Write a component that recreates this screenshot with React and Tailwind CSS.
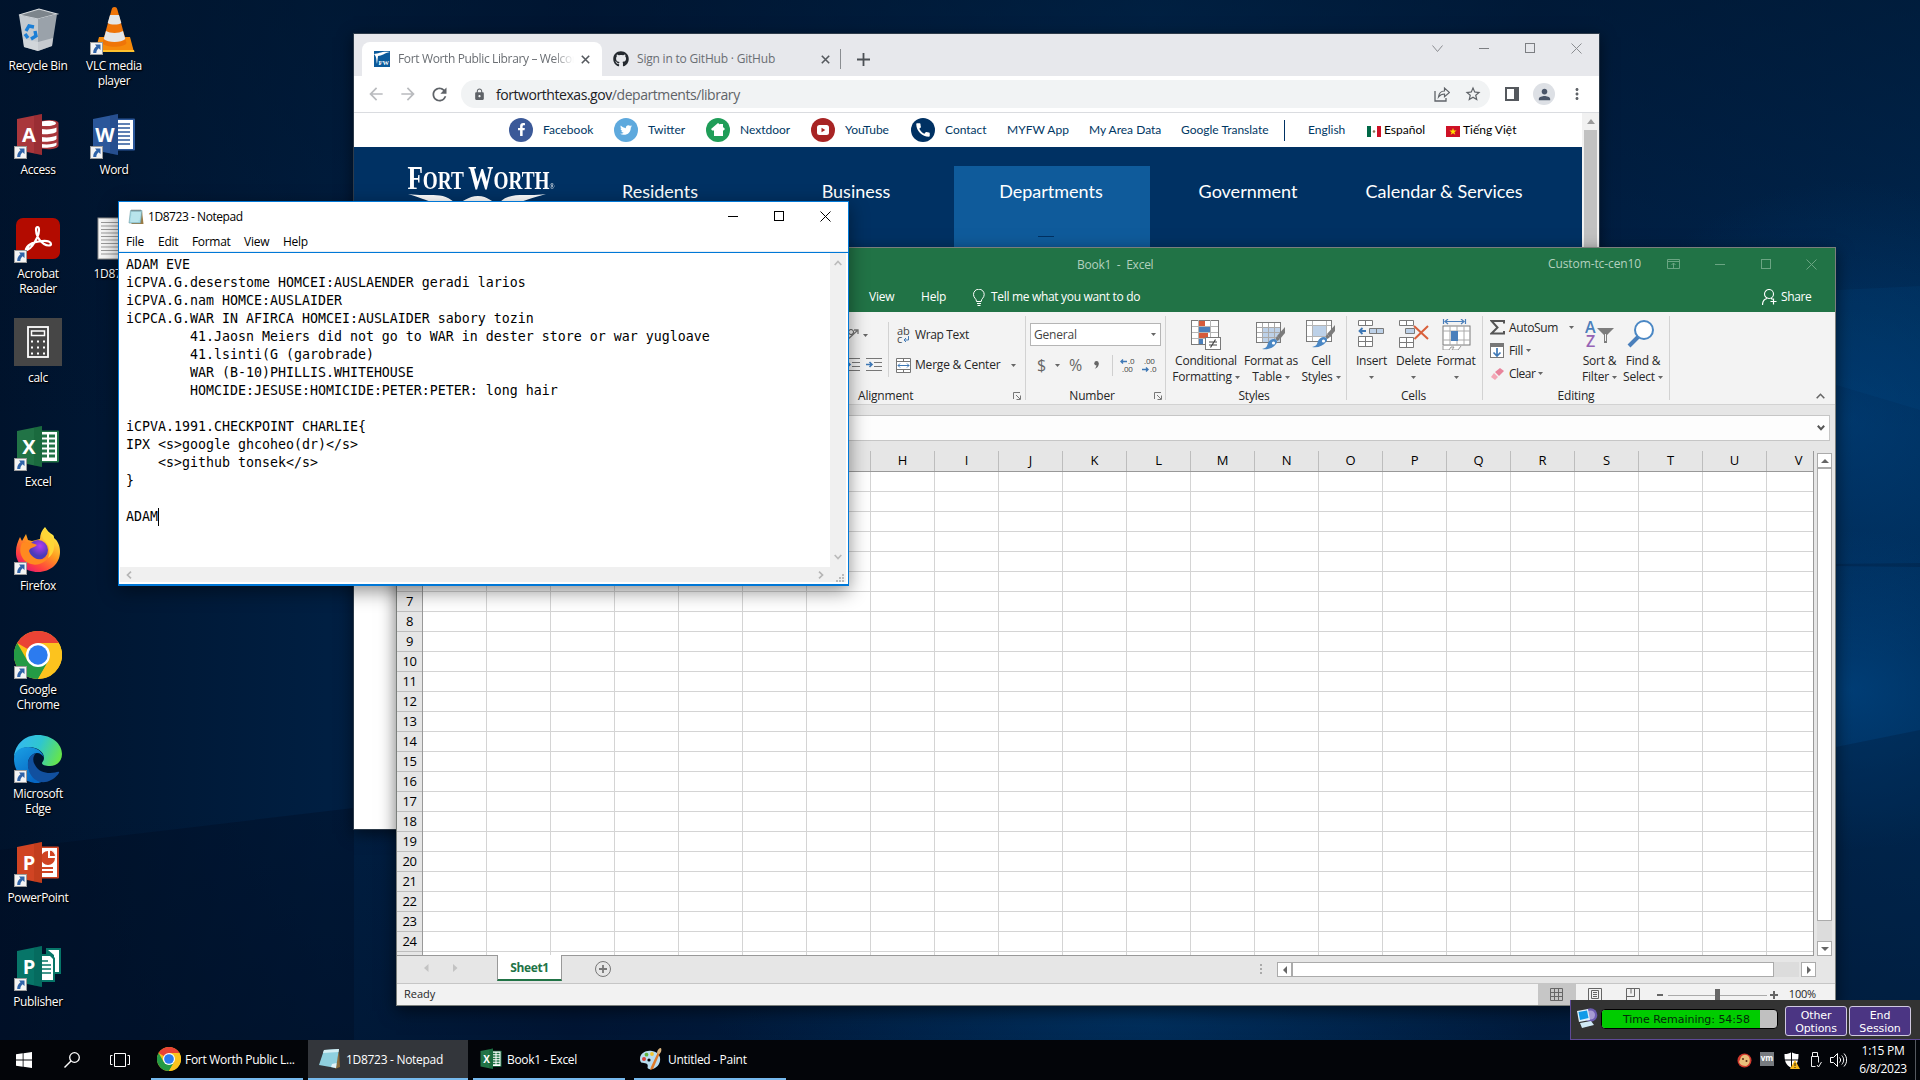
import React from "react";
import { FaFacebookF, FaTwitter, FaGithub } from "react-icons/fa";
import { MdRefresh, MdLock, MdStarBorder, MdPerson, MdArrowBack, MdArrowForward, MdMoreVert, MdCall } from "react-icons/md";

/* ---------- shared bits ---------- */

const Caret = ({ className = "" }) => (
  <svg className={"shrink-0 " + className} width="5" height="3" viewBox="0 0 5 3"><path d="M0 0h5L2.5 3z" fill="#666" /></svg>
);

const Shortcut = () => (
  <svg className="absolute bottom-0 left-0" width="13" height="13" viewBox="0 0 13 13">
    <rect x=".5" y=".5" width="12" height="12" fill="#f4f4f4" stroke="#9a9a9a" />
    <path d="M5 2.5h5.5V8L8.6 6.2C7.2 7.4 6.4 8.9 6.3 11H3.2c0-3 1.2-5.200 3.300-6.700z" fill="#2f63a8" />
  </svg>
);

const ChromeLogo = ({ className = "" }) => (
  <svg className={className} viewBox="0 0 48 48">
    <circle cx="24" cy="24" r="24" fill="#fbc116" />
    <path d="M24 24 3.200 12A24 24 0 0 1 44.800 12z" fill="#ea4335" />
    <path d="M3.200 12A24 24 0 0 0 24 48l10.400-18L13.600 30z" fill="#249a45" />
    <path d="M24 12h20.800A24 24 0 0 1 24 48l10.400-18z" fill="#fcc31e" />
    <circle cx="24" cy="24" r="12" fill="#fff" />
    <circle cx="24" cy="24" r="9.700" fill="#2c7bef" />
  </svg>
);

const OfficeIcon = ({ letter, color, dark, children, className = "" }) => (
  <svg className={className} viewBox="0 0 48 48">
    {children}
    <path d="M3 8 28 3v41L3 39z" fill={color} />
    <path d="M20 4.600 28 3v41l-8-1.600z" fill={dark} opacity=".35" />
    <text x="15" y="31" textAnchor="middle" fontFamily="Open Sans, sans-serif" fontWeight="700" fontSize="20" fill="#fff">{letter}</text>
  </svg>
);

const AccessIcon = () => (
  <OfficeIcon letter="A" color="#a9373c" dark="#7d1f26" className="h-12 w-12">
    <path d="M27 10c8-2 17-1 17.500 2v23c-1 3-9 4-17.500 2.500z" fill="#a9373c" />
    <path d="M27 10.500c8-1.500 15-.5 15 1.700s-8 3.500-15 2.600zM27 18c7 1 13 0 15.500-1.500v4c-2 2.500-9 3-15.500 2.500zM27 26c7 1 13 0 15.500-1.500v3.500c-2 2.500-9 3-15.500 2.500zM27 33c7 1 13 0 15.500-1.500v2.500c-2 2.500-9 3-15.500 2.500z" fill="#fff" />
  </OfficeIcon>
);
const WordIcon = () => (
  <OfficeIcon letter="W" color="#2b579a" dark="#1c3f7c" className="h-12 w-12">
    <rect x="26" y="7.500" width="19" height="32" rx="1" fill="#2b579a" />
    <rect x="26" y="9" width="17" height="29" fill="#fff" />
    <path d="M28 13h12M28 17h12M28 21h12M28 25h12M28 29h12M28 33h12" stroke="#2b579a" strokeWidth="1.700" />
  </OfficeIcon>
);
const ExcelIcon = ({ className = "h-12 w-12" }) => (
  <OfficeIcon letter="X" color="#217346" dark="#0f5a30" className={className}>
    <rect x="26" y="7.500" width="19" height="32" rx="1" fill="#217346" />
    <rect x="26" y="9" width="17" height="29" fill="#fff" />
    <path d="M28 13h5M28 18h5M28 23h5M28 28h5M28 33h5M35 13h6M35 18h6M35 23h6M35 28h6M35 33h6" stroke="#217346" strokeWidth="2.800" />
  </OfficeIcon>
);
const PowerPointIcon = () => (
  <OfficeIcon letter="P" color="#d04423" dark="#a83315" className="h-12 w-12">
    <rect x="26" y="7.500" width="19" height="32" rx="1" fill="#d04423" />
    <rect x="26" y="9" width="17" height="29" fill="#fff" />
    <path d="M34 12v7h7a7 7 0 1 1-7-7z" fill="#d04423" /><path d="M35.500 11a6.500 6.500 0 0 1 6 6.500h-6z" fill="#d04423" stroke="#fff" />
    <path d="M28 29h11M28 33h11" stroke="#d04423" strokeWidth="1.800" />
  </OfficeIcon>
);
const PublisherIcon = () => (
  <OfficeIcon letter="P" color="#077568" dark="#04594f" className="h-12 w-12">
    <path d="M32 5h15v26H32z" fill="#077568" /><path d="M34 7h11v22h-5V12z" fill="#fff" />
    <path d="M26 11h11l4 4v24H26z" fill="#077568" /><path d="M26 13h10l3 3v21H26z" fill="#fff" />
    <path d="M28 18h6M28 22h9M28 26h9M28 30h9" stroke="#077568" strokeWidth="1.700" />
  </OfficeIcon>
);

const RecycleBin = () => (
  <svg className="h-12 w-12" viewBox="0 0 48 48">
    <path d="M5 8 25 2l18 5-19 5z" fill="#7d858c" stroke="#d8dcdf" strokeWidth="1.200" />
    <path d="M5 8 24 12v32L10 40z" fill="#c4cad0" /><path d="M24 12 43 7 38 39 24 44z" fill="#9aa2aa" />
    <path d="M9 32l15 3 15-4-1 8-14 5-14-4z" fill="#d9dcde" opacity=".7" />
    <g fill="none" stroke="#1c7fd6" strokeWidth="3.400"><path d="M12 24l3-5 5 1" /><path d="M21 24l1 5-5 3" /><path d="M14 31l-3-4" /></g>
  </svg>
);
const Vlc = () => (
  <svg className="h-12 w-12" viewBox="0 0 48 48">
    <path d="M9 30h31l4 15H5z" fill="#f58a0b" /><path d="M5 43h39l.5 2H4.500z" fill="#ffc12e" />
    <path d="M24.500 0c2 0 2.500 1 3 3l9 33c-2 5-22 5-24 0l9-33c.5-2 1-3 3-3z" fill="#ef7509" />
    <path d="M20 8h9l2.300 8c-3 2-10.500 2-13.600 0zM16 24c4 2.500 13 2.500 17 0l2.300 8c-4 4-17.500 4-21.600 0z" fill="#e4e6e8" />
  </svg>
);
const Acrobat = () => (
  <svg className="h-12 w-12" viewBox="0 0 48 48">
    <rect x="2" y="3" width="44" height="41" rx="7" fill="#b30b00" />
    <path d="M12 34c3-6 9-7 16-8 6-.6 9 1 9 3s-4 2-7 0c-5-3-8-9-8-14 0-4 3-4 3 0 0 6-4 12-7 16-2 3-7 5-6 3z" fill="none" stroke="#fff" strokeWidth="2.200" />
  </svg>
);
const TextFile = () => (
  <svg className="h-12 w-12" viewBox="0 0 48 48">
    <rect x="8" y="3" width="32" height="41" fill="#f8f8f8" stroke="#8d8d8d" />
    <path d="M11 7.500h26M11 11h26M11 14.500h26M11 18h26M11 21.500h26M11 25h26M11 28.500h26M11 32h26M11 35.500h26M11 39h26" stroke="#9b9b9b" strokeWidth="1" />
  </svg>
);
const Calc = () => (
  <div className="-mt-px flex h-12 w-12 items-center justify-center bg-[#464646]">
    <svg width="24" height="32" viewBox="0 0 24 32">
      <rect x="2" y="1" width="20" height="30" fill="none" stroke="#fff" strokeWidth="1.800" />
      <rect x="5.500" y="5" width="13" height="4.500" fill="none" stroke="#fff" strokeWidth="1.500" />
      <path d="M5 15.500h16M5 21.500h16M5 27.500h16" stroke="#fff" strokeWidth="2" strokeDasharray="2 4" />
    </svg>
  </div>
);
const Firefox = () => (
  <svg className="h-12 w-12" viewBox="0 0 48 48">
    <defs>
      <linearGradient id="ffBody" x1=".8" y1=".1" x2=".2" y2="1"><stop offset="0" stopColor="#fff14a" /><stop offset=".4" stopColor="#ff9a1f" /><stop offset=".75" stopColor="#ff4040" /><stop offset="1" stopColor="#e3127a" /></linearGradient>
      <radialGradient id="ffGlobe" cx=".6" cy=".3"><stop offset="0" stopColor="#b23bf0" /><stop offset="1" stopColor="#4b3bb8" /></radialGradient>
    </defs>
    <path d="M31 0c2 3 4 6 8 8 1 1 1 2 1 3 4 3 6 8 6 14 0 11-9 20-22 20S1 36 2 24c0-5 2-10 4-14l2 4 4-7 2 6 4 1 8-2c0-5 2-9 5-12z" fill="url(#ffBody)" />
    <circle cx="24" cy="23" r="10" fill="url(#ffGlobe)" />
    <path d="M8 16c6-2 11 0 15 2-3 3-7 2-8 6 3 9 14 11 20 5-4 9-17 12-25 4-4-5-5-11-2-17z" fill="#ff8a20" />
    <path d="M31 1c2 4 8 8 9 14 1 6-1 13-6 16 3-6 1-14-4-18-3-4-2-9 1-12z" fill="#ffd636" />
  </svg>
);
const Edge = () => (
  <svg className="h-12 w-12" viewBox="0 0 48 48">
    <defs>
      <linearGradient id="edTop" x1="0" y1=".3" x2="1" y2=".6"><stop offset="0" stopColor="#35b8f2" /><stop offset=".5" stopColor="#2fc6cf" /><stop offset="1" stopColor="#66e54a" /></linearGradient>
      <linearGradient id="edLeft" x1="0" y1="0" x2=".5" y2="1"><stop offset="0" stopColor="#1aa0e4" /><stop offset="1" stopColor="#0667c4" /></linearGradient>
    </defs>
    <path d="M0 22C1 9 11 0 24 0c14 0 24 9 24 19 0 8-6 12-12 12-5 0-8-1-8-3 0-1 2-2 2-5 0-4-3-8-9-10C12 10 3 14 0 22z" fill="url(#edTop)" />
    <path d="M0 24c0-8 6-12 14-12 9 0 15 5 16 11-1-3-4-5-7-5-4 0-9 4-9 11 0 9 8 15 15 17-2 1.500-4 2-6 2C10 48 0 37 0 24z" fill="url(#edLeft)" />
    <path d="M14 27c1-5 4-8 8-9-4 4-3 9-1 12 3 6 9 8 15 8 5 0 8-2 9-1 1 0-3 6-8 8-5 3-11 3-15 0-5-3-9-10-8-18z" fill="#11509f" />
  </svg>
);

const ChromeLogoBig = () => <ChromeLogo className="h-12 w-12" />;

const ICONS = [
  [RecycleBin, "Recycle Bin", false], [AccessIcon, "Access", true], [Acrobat, "Acrobat Reader", true], [Calc, "calc", false],
  [ExcelIcon, "Excel", true], [Firefox, "Firefox", true], [ChromeLogoBig, "Google Chrome", true], [Edge, "Microsoft Edge", true],
  [PowerPointIcon, "PowerPoint", true], [PublisherIcon, "Publisher", true],
];
const ICONS2 = [[Vlc, "VLC media player", true], [WordIcon, "Word", true], [TextFile, "1D8723", false]];

function DesktopIcon({ Icon, label, shortcut }) {
  return (
    <div className="flex h-[104px] w-[76px] flex-col items-center pt-[7px]">
      <div className="relative h-12 w-12"><Icon />{shortcut && <Shortcut />}</div>
      <div className="mt-[3px] w-[68px] text-center text-[12px] leading-[15px] tracking-[-0.35px] text-white [text-shadow:0_1px_2px_#000,1px_1px_1px_#000]">{label}</div>
    </div>
  );
}

/* ---------- wallpaper ---------- */

function Wallpaper() {
  return (
    <svg className="absolute inset-0" width="1920" height="1080" viewBox="0 0 1920 1080">
      <defs>
        <linearGradient id="base" x1="0" x2="1"><stop offset="0" stopColor="#00132c" /><stop offset=".17" stopColor="#001f42" /><stop offset=".3" stopColor="#00183a" /><stop offset=".6" stopColor="#00305f" /><stop offset=".8" stopColor="#002148" /><stop offset="1" stopColor="#002a55" /></linearGradient>
        <linearGradient id="shade" x1="0" y1="0" x2="0" y2="1"><stop offset="0" stopColor="#00142c" stopOpacity=".6" /><stop offset=".4" stopColor="#00112a" stopOpacity="0" /><stop offset=".75" stopColor="#00112a" stopOpacity="0" /><stop offset="1" stopColor="#00112a" stopOpacity=".5" /></linearGradient>
        <radialGradient id="glow"><stop offset="0" stopColor="#0057a0" stopOpacity=".75" /><stop offset="1" stopColor="#0057a0" stopOpacity="0" /></radialGradient>
      </defs>
      <rect width="1920" height="1080" fill="url(#base)" />
      <rect width="1920" height="1080" fill="url(#shade)" />
      <ellipse cx="1850" cy="420" rx="260" ry="240" fill="url(#glow)" opacity=".45" />
      <ellipse cx="1850" cy="690" rx="200" ry="160" fill="url(#glow)" opacity=".6" />
      <ellipse cx="1130" cy="1020" rx="420" ry="60" fill="url(#glow)" opacity=".3" />
      <path d="M1836 290 1920 286V410L1836 385z" fill="#0059a0" opacity=".12" />
      <path d="M1836 747 1920 730V1000H1836z" fill="#001a38" opacity=".3" />
      <path d="M0 850 354 808V1080H0z" fill="#000c20" opacity=".35" />
      <path d="M1836 564 1920 563V567L1836 566z" fill="#001a38" opacity=".3" />
    </svg>
  );
}

/* ---------- browser window ---------- */

const SocialLink = ({ bg, icon, label, w }) => (
  <div className={"flex shrink-0 items-center " + w}>
    <span className={"mr-[10px] flex h-6 w-6 shrink-0 items-center justify-center rounded-full text-white " + bg}>{icon}</span>
    <span className="pt-px">{label}</span>
  </div>
);

function Browser() {
  return (
    <div className="absolute left-[353px] top-[33px] h-[797px] w-[1247px] border border-[#2d3b4a] bg-white shadow-[0_4px_14px_rgba(0,0,0,0.5)]">
      {/* tab strip */}
      <div className="flex h-[42px] bg-[#e7e8ec] pl-2 text-[12px] text-[#6a6e73]">
        <div className="mt-2 flex h-[34px] w-[240px] items-center rounded-t-lg bg-white pl-3 pr-[12px]">
          <svg className="shrink-0" width="16" height="16" viewBox="0 0 16 16"><rect width="16" height="16" fill="#0b5a9b" /><path d="M0 3c5 0 7-3 16-2-6 1-8 4-12 4l-1 8c-1-4 0-7-3-10z" fill="#fff" /><text x="4.500" y="14" fontSize="6.500" fontWeight="700" fontFamily="Liberation Serif, serif" fill="#fff">FW</text></svg>
          <span className="ml-2 w-[176px] overflow-hidden whitespace-nowrap tracking-[-0.36px] [mask-image:linear-gradient(to_right,black_88%,transparent_100%)]">Fort Worth Public Library – Welcome</span>
          <svg className="ml-auto shrink-0" width="9" height="9" viewBox="0 0 9 9"><path d="M.8.8l7.400 7.400M8.200.8.800 8.200" stroke="#55595e" strokeWidth="1.600" /></svg>
        </div>
        <div className="mt-2 flex h-[34px] w-[238px] items-center pl-[11px]">
          <FaGithub size={16} color="#24292f" />
          <span className="ml-2 w-[184px] whitespace-nowrap tracking-[-0.2px]">Sign in to GitHub · GitHub</span>
          <svg width="9" height="9" viewBox="0 0 9 9"><path d="M.8.8l7.400 7.400M8.200.8.800 8.200" stroke="#55595e" strokeWidth="1.600" /></svg>
        </div>
        <div className="mt-[15px] h-5 w-px bg-[#8a8d91]" />
        <svg className="ml-[16px] mt-[19px]" width="13" height="13" viewBox="0 0 13 13"><path d="M6.500 0v13M0 6.500h13" stroke="#4c5055" strokeWidth="1.800" /></svg>
        <div className="ml-auto flex gap-9 pr-[17px] pt-[9px]">
          <svg width="11" height="11" viewBox="0 0 11 11"><path d="M.5 2.500l5 6 5-6" fill="none" stroke="#8b8d91" /></svg>
          <svg width="10" height="11" viewBox="0 0 10 11"><path d="M0 5.500h10" stroke="#7c7e82" /></svg>
          <svg width="10" height="11" viewBox="0 0 10 11"><rect x=".5" y=".5" width="9" height="9" fill="none" stroke="#7c7e82" /></svg>
          <svg width="11" height="11" viewBox="0 0 11 11"><path d="M.5.5l10 10M10.500.5l-10 10" stroke="#8b8d91" /></svg>
        </div>
      </div>
      {/* toolbar */}
      <div className="flex h-[37px] items-center border-b border-[#dadce0] px-[12px] pr-[13px] text-[#5f6368]">
        <MdArrowBack size={20} color="#b9bbbe" />
        <MdArrowForward className="ml-3" size={20} color="#b9bbbe" />
        <MdRefresh className="ml-[11px]" size={21} />
        <div className="ml-[11px] flex h-7 w-[1029px] items-center rounded-full bg-[#f1f3f4] pl-[12px] pr-[8px]">
          <MdLock size={13} />
          <span className="ml-[10px] text-[14px] tracking-[-0.44px]"><span className="text-[#202124]">fortworthtexas.gov</span>/departments/library</span>
          <svg className="ml-auto mr-[14px]" width="16" height="16" viewBox="0 0 16 16"><path d="M1 5v10h11v-3" fill="none" stroke="#5f6368" strokeWidth="1.300" /><path d="M4.500 11c.5-4 2.500-6 6-6V2l5 4.500-5 4.300V8c-3 0-4.500 1-6 3z" fill="none" stroke="#5f6368" strokeWidth="1.200" /></svg>
          <MdStarBorder size={18} />
        </div>
        <svg className="ml-[15px]" width="14" height="14" viewBox="0 0 14 14"><rect x="1" y="1" width="12" height="12" fill="none" stroke="#55595e" strokeWidth="2" /><rect x="9" y="0" width="5" height="14" fill="#55595e" /></svg>
        <span className="ml-[14px] flex h-[22px] w-[22px] items-center justify-center rounded-full bg-[#dde0e5]"><MdPerson size={17} color="#4a5568" /></span>
        <MdMoreVert className="ml-auto" size={18} />
      </div>
      {/* page */}
      <div className="flex">
        <div className="w-[1228px]">
          <div className="flex h-[34px] items-center pb-[1px] pl-[155px] font-['Lato',sans-serif] text-[12px] text-[#003764]">
            <SocialLink w="w-[105px]" bg="bg-[#3b5998]" icon={<FaFacebookF size={13} />} label="Facebook" />
            <SocialLink w="w-[92px]" bg="bg-[#5ea9dd]" icon={<FaTwitter size={12} />} label="Twitter" />
            <SocialLink w="w-[105px]" bg="bg-[#1f9d58]" icon={<svg width="14" height="13" viewBox="0 0 14 13"><path d="M7 0l2 1.600V1h3v3l2 2-1.500 1.500H12V13H3V7.500H1.200L0 6z" fill="#fff" /></svg>} label="Nextdoor" />
            <SocialLink w="w-[100px]" bg="bg-[#a82424]" icon={<svg width="12" height="10" viewBox="0 0 12 10"><rect width="12" height="10" rx="2.500" fill="#fff" /><path d="M4.500 2.800L8.300 5 4.500 7.200z" fill="#a82424" /></svg>} label="YouTube" />
            <SocialLink w="w-[96px]" bg="bg-[#003163]" icon={<MdCall size={18} />} label="Contact" />
            <span className="w-[82px] pt-px">MYFW App</span>
            <span className="w-[92px] pt-px">My Area Data</span>
            <span className="w-[103px] pt-px">Google Translate</span>
            <span className="mt-px h-[21px] w-px bg-[#003163]" />
            <span className="ml-[23px] w-[59px] pt-px">English</span>
            <span className="flex w-[79px] items-center pt-px text-black">
              <svg className="mr-[3px] mt-[2px]" width="14" height="11" viewBox="0 0 14 11"><rect width="14" height="11" fill="#fff" /><rect width="4" height="11" fill="#006847" /><rect x="10" width="4" height="11" fill="#ce1126" /><circle cx="7" cy="5.500" r="1.300" fill="#8b7355" /></svg>Español
            </span>
            <span className="flex items-center whitespace-nowrap pt-px text-black">
              <svg className="mr-[3px] mt-[2px]" width="14" height="11" viewBox="0 0 14 11"><rect width="14" height="11" fill="#ce1126" /><path d="M7 2l.9 2.600h2.700L8.400 6.200l.9 2.600L7 7.200 4.700 8.800l.9-2.600L3.400 4.600h2.700z" fill="#ffde00" /></svg>Tiếng Việt
            </span>
          </div>
          <div className="flex h-[430px] bg-[#003163] pl-[52px] pt-[19px] font-['Lato',sans-serif] text-[18px] text-white">
            <div className="w-[156px] shrink-0">
              <div className="-mt-[3px] flex h-[29px] w-[200px] origin-left scale-x-[0.74] items-baseline pl-[2px] font-['Liberation_Serif',serif] font-bold leading-[29px]">
                <span className="text-[34px]">F</span><span className="text-[26px]">ORT</span><span className="ml-[6px] text-[34px]">W</span><span className="text-[26px]">ORTH</span><span className="text-[9px] font-normal">®</span>
              </div>
              <svg className="ml-[2px] mt-[2px]" width="140" height="20" viewBox="0 0 140 20"><path d="M0 0c20 3 34-3 46 8 6 4 12-6 24-6 12 0 16 10 22 6 12-11 26-5 46-8-14 4-22 6-32 11-14 6-24 3-38-2-16 5-24 7-38 1C22 8 14 4 0 0z" fill="#fff" /></svg>
            </div>
            <div className="w-[196px] pt-[12px] text-center">Residents</div>
            <div className="w-[196px] pt-[12px] text-center">Business</div>
            <div className="flex w-[196px] flex-col items-center bg-[#0f5b9b] pt-[12px] text-center"><span className="-ml-[2px]">Departments</span><span className="-ml-3 mt-[31px] h-px w-4 bg-[#003163]" /></div>
            <div className="w-[196px] pt-[12px] text-center">Government</div>
            <div className="w-[196px] pt-[12px] text-center">Calendar &amp; Services</div>
          </div>
        </div>
        <div className="flex w-[17px] flex-col items-center bg-[#f1f1f1]">
          <svg className="mt-[6px]" width="8" height="5" viewBox="0 0 8 5"><path d="M0 5l4-5 4 5z" fill="#9a9a9a" /></svg>
          <div className="mt-[6px] h-[447px] w-[13px] bg-[#c1c1c1]" />
        </div>
      </div>
    </div>
  );
}

/* ---------- spreadsheet window ---------- */

const FIRST_COLS = 7;
const COLS = "HIJKLMNOPQRSTUV".split("");
const FIRST_ROWS = 6;
const ROWS = Array.from({ length: 25 }, (_, i) => i + 1);

const Group = ({ w, label, children, launcher }) => (
  <div className={"flex h-[84px] shrink-0 flex-col border-r border-[#d2d2d2] " + w}>
    <div className="flex h-[75px]">{children}</div>
    <div className="flex h-[9px] items-center">
      <span className="w-full text-center leading-[9px]">{label}</span>
      {launcher && <svg className="mr-[3px] shrink-0" width="8" height="8" viewBox="0 0 8 8"><path d="M.5 7V.5H7M3 3l4 4M7.500 3.500v4h-4" fill="none" stroke="#777" /></svg>}
    </div>
  </div>
);

const BigButton = ({ w, icon, a, b }) => (
  <div className={"flex shrink-0 flex-col items-center pt-[3px] " + w}>
    <div className="flex h-[34px] items-start">{icon}</div>
    <span className="whitespace-nowrap leading-4">{a}</span>
    <span className="flex h-4 items-center whitespace-nowrap leading-4">{b}<Caret className={b ? "ml-[3px]" : ""} /></span>
  </div>
);

const CondIcon = () => (
  <svg width="30" height="31" viewBox="0 0 30 31"><rect x=".5" y="1.500" width="27" height="24" fill="#fff" stroke="#7a7a7a" /><path d="M7.500 1v24M19.500 1v24M1 7.500h26M1 13.500h26M1 19.500h26" stroke="#b5b5b5" /><path d="M8 2h6v5H8zM8 14h9v5H8z" fill="#d65b3b" /><path d="M8 8h11v5H8zM8 20h4v5H8z" fill="#4a7fbb" /><rect x="14.500" y="18.500" width="15" height="12" fill="#fff" stroke="#7a7a7a" /><path d="M18 23h8M18 26h8M24.500 20.500l-5 8" stroke="#444" strokeWidth="1.200" /></svg>
);
const Brush = () => (
  <g><path d="M29 5v6l-5 6-3-3z" fill="#7b7b7b" /><path d="M21 14l3 3-2.500 2-2-2z" fill="#7b7b7b" /><path d="M18 17c3 0 4 3 2 5-3 4-8 6-14 5 5-1 5-3 6-6 1-2 3-4 6-4z" fill="#4a87c4" /><circle cx="17.500" cy="21" r="1.600" fill="#fff" /></g>
);
const TableIcon = () => (
  <svg width="30" height="31" viewBox="0 0 30 31"><rect x=".5" y="3.500" width="24" height="20" fill="#fff" stroke="#7a7a7a" /><path d="M7 9h17v14H7z" fill="#bdd1e8" /><path d="M6.500 4v19M12.500 4v19M18.500 4v19M1 8.500h23M1 13.500h23M1 18.500h23" stroke="#aaa" /><g transform="translate(0 3)"><Brush /></g></svg>
);
const CellIcon = () => (
  <svg width="30" height="31" viewBox="0 0 30 31"><rect x=".5" y="1.500" width="25" height="21" fill="#fff" stroke="#7a7a7a" /><path d="M6.500 2v20M20.500 2v20M1 6.500h24M1 17.500h24" stroke="#b5b5b5" /><path d="M7 7h13v10H7z" fill="#bdd1e8" /><g transform="translate(0 1)"><Brush /></g></svg>
);
const InsertIcon = () => (
  <svg width="27" height="29" viewBox="0 0 27 29"><g fill="#fff" stroke="#7a7a7a"><path d="M.5 1.500h14v5H.5zM7.500 1.500v5M.5 17.500h14v10H.5zM7.500 17.500v10M.5 22.500h14" /><path d="M11.500 9.500h14v5h-14zM18.500 9.500v5" fill="#bdd1e8" /></g><path d="M8 12H2M4.500 9L1.500 12l3 3" fill="none" stroke="#3f78b5" strokeWidth="1.800" /></svg>
);
const DeleteIcon = () => (
  <svg width="30" height="29" viewBox="0 0 30 29"><g fill="#fff" stroke="#7a7a7a"><path d="M.5 1.500h14v5H.5zM7.500 1.500v5M.5 18.500h14v10H.5zM7.500 18.500v10M.5 23.500h14" /><path d="M6.500 9.500h9v5h-9z" fill="#bdd1e8" /></g><path d="M15 7l14 13M29 7L15.500 20" stroke="#d9603b" strokeWidth="2" /></svg>
);
const FormatIcon = () => (
  <svg width="29" height="31" viewBox="0 0 29 31"><path d="M1.500 0v5M23.500 0v5M3 2.500h19M6 0L3 2.500 6 5M19 0l3 2.500L19 5" fill="none" stroke="#4a7fbb" strokeWidth="1.200" /><rect x="1" y="7" width="27" height="19" fill="#fff" stroke="#7a7a7a" /><path d="M8 7v19M15 7v19M22 7v19M1 12h27M1 21h27" stroke="#aaa" /><path d="M9 12h7v10H9z" fill="#4a7fbb" /><path d="M1 27v4h6l2-3h3l-2 3h6l3-4" fill="#fff" stroke="#999" /></svg>
);
const SortIcon = () => (
  <svg width="30" height="31" viewBox="0 0 30 31"><text x="0" y="14" fontFamily="Open Sans, sans-serif" fontSize="16" fontWeight="600" fill="#4a7fbb">A</text><text x="1" y="28" fontFamily="Open Sans, sans-serif" fontSize="16" fontWeight="600" fill="#9563b5">Z</text><path d="M12 9h17l-7 7v8h-3v-8z" fill="#7d7d7d" /><path d="M20.500 15v7" stroke="#f3f3f3" /></svg>
);
const FindIcon = () => (
  <svg className="-ml-1" width="28" height="31" viewBox="0 0 28 31"><path d="M11 18L2 27" stroke="#4a7fbb" strokeWidth="4" /><circle cx="17" cy="11" r="9" fill="#fff" stroke="#4a87c4" strokeWidth="2" /></svg>
);

function ScrollBtn({ d, className }) {
  return (
    <div className={"flex items-center justify-center border border-[#ababab] bg-white " + className}>
      <svg width="8" height="8" viewBox="0 0 8 8"><path d={d} fill="#666" /></svg>
    </div>
  );
}

function Excel() {
  return (
    <div className="absolute left-[396px] top-[247px] h-[759px] w-[1440px] border border-[#7b7f7c] bg-[#e6e6e6] text-[12px] tracking-[-0.2px] text-[#262626] shadow-[0_5px_16px_rgba(0,0,0,0.55)]">
      {/* title and tab rows */}
      <div className="h-16 bg-[#217346] text-white">
        <div className="flex h-[34px] items-center text-[#b3d1bf]">
          <span className="w-[1436px] whitespace-pre pl-[680px] tracking-[-0.25px]">Book1  -  Excel</span>
          <div className="flex shrink-0 items-center pb-[2px] -ml-[285px] w-[285px]">
            <span className="w-[119px] whitespace-nowrap tracking-[-0.1px]">Custom-tc-cen10</span>
            <svg width="13" height="10" viewBox="0 0 13 10"><path d="M.5.5h12v9H.5zM.5 2.500h12M6.500 9V4M4.500 6l2-2 2 2" fill="none" stroke="#6ba583" /></svg>
            <svg className="ml-[35px]" width="10" height="10" viewBox="0 0 10 10"><path d="M0 5.500h10" stroke="#6ba583" /></svg>
            <svg className="ml-[36px]" width="10" height="10" viewBox="0 0 10 10"><rect x=".5" y=".5" width="9" height="9" fill="none" stroke="#6ba583" /></svg>
            <svg className="ml-[35px]" width="11" height="11" viewBox="0 0 11 11"><path d="M.5.5l10 10M10.500.5l-10 10" stroke="#6ba583" /></svg>
          </div>
        </div>
        <div className="flex h-[30px] items-center pl-[472px]">
          <span className="w-[52px]">View</span><span className="w-[52px]">Help</span>
          <svg width="12" height="17" viewBox="0 0 12 17"><path d="M3.500 12.500c0-3-3-3.500-3-7a5.300 5.300 0 0 1 10.700 0c0 3.500-3 4-3 7zM4 14.500h4M4.500 16.500h3" fill="none" stroke="#fff" /></svg>
          <span className="ml-[6px] whitespace-nowrap font-medium tracking-[-0.32px]">Tell me what you want to do</span>
          <svg className="ml-auto" width="15" height="17" viewBox="0 0 15 17"><circle cx="7" cy="5" r="4.500" fill="none" stroke="#fff" strokeWidth="1.100" /><path d="M.5 16c0-4 2-6 4.500-6.500M9 9l1.500 1.500M11.500 9.500v6M8.500 12.500h6" fill="none" stroke="#fff" strokeWidth="1.200" /></svg>
          <span className="ml-1 w-[54px] font-medium tracking-[-0.4px]">Share</span>
        </div>
      </div>
      {/* ribbon */}
      <div className="flex h-[93px] border-b border-[#d2d2d2] bg-[#f3f3f3] pt-1">
        <div className="flex h-[84px] w-[629px] shrink-0 flex-col border-r border-[#d2d2d2]">
          <div className="flex h-[75px] justify-end pt-1">
            <div className="flex w-[44px] flex-col">
              <div className="flex h-[30px] items-center"><svg width="16" height="16" viewBox="0 0 16 16"><path d="M2 14L14 3M10 3h4v4" fill="none" stroke="#777" strokeWidth="1.300" /><circle cx="7" cy="5" r="2.500" fill="none" stroke="#555" /></svg><Caret className="ml-[3px]" /></div>
              <div className="flex h-[30px] items-center gap-[6px]">
                {[0, 1].map((k) => (
                  <svg key={k} width="16" height="14" viewBox="0 0 16 14"><path d="M0 .5h16M8 4.500h8M8 8.500h8M0 12.500h16" stroke="#777" /><path d="M0 6.500h6M3.500 4L6 6.500 3.500 9" fill="none" stroke="#3f78b5" strokeWidth="1.600" /></svg>
                ))}
              </div>
            </div>
            <div className="mt-[2px] h-[55px] w-px bg-[#d2d2d2]" />
            <div className="w-[136px] pl-[7px]">
              <div className="flex h-[30px] items-center">
                <svg width="15" height="17" viewBox="0 0 15 17"><text x="1" y="8" fontSize="11" fontFamily="Open Sans, sans-serif" fill="#444">ab</text><text x="1" y="16" fontSize="11" fontFamily="Open Sans, sans-serif" fill="#444">c</text><path d="M12.500 9v4H8M10 11l-2 2 2 2" fill="none" stroke="#3f78b5" /></svg>
                <span className="ml-1 tracking-[-0.35px]">Wrap Text</span>
              </div>
              <div className="flex h-[30px] items-center">
                <svg width="15" height="15" viewBox="0 0 15 15"><path d="M.5.5h14v14H.5zM.5 3.500h14M.5 11.500h14M7.500.5v3M7.500 11.500v3" fill="#fff" stroke="#777" /><path d="M2 7.500h11M4 5.500l-2 2 2 2M11 5.500l2 2-2 2" fill="none" stroke="#3f78b5" /></svg>
                <span className="ml-1 w-[96px] whitespace-nowrap">Merge &amp; Center</span><Caret />
              </div>
            </div>
          </div>
          <div className="flex h-[9px] items-center"><span className="ml-[461px] w-[155px] leading-[9px]">Alignment</span><svg width="8" height="8" viewBox="0 0 8 8"><path d="M.5 7V.5H7M3 3l4 4M7.500 3.500v4h-4" fill="none" stroke="#777" /></svg></div>
        </div>
        <Group w="w-[140px]" label={<span className="pl-1">Number</span>} launcher>
          <div className="pl-1 pt-[7px]">
            <div className="flex h-[23px] w-[131px] items-center justify-between border border-[#b5b5b5] bg-white pl-[3px] pr-1 text-[#444]">General<Caret /></div>
            <div className="mt-1 flex h-[30px] items-center text-[16px] leading-none text-[#666]">
              <span className="ml-[7px] w-[18px]">$</span><Caret /><span className="ml-[9px] w-[24px]">%</span>
              <svg className="ml-[1px] mr-[13px]" width="5" height="8" viewBox="0 0 5 8"><circle cx="2.500" cy="2.300" r="2.200" fill="#666" /><path d="M4.700 2.500c0 3-1.500 4.500-4 5.200 1-1 1.600-2 1.700-3.200z" fill="#666" /></svg>
              <span className="h-[21px] w-px bg-[#cfcfcf]" />
              {[0, 1].map((k) => (
                <svg key={k} className="ml-[7px]" width="15" height="15" viewBox="0 0 15 15"><g fontSize="8" fontFamily="Open Sans, sans-serif" fill="#444"><text x={k ? 2 : 8} y="6">{k ? ".00" : ".0"}</text><text x={k ? 8 : 2} y="14">{k ? ".0" : ".00"}</text></g><path d={k ? "M0 11.500h6M4 9.500l2 2-2 2" : "M1 3.500h6M3 1.500l-2 2 2 2"} fill="none" stroke="#3f78b5" strokeWidth="1.400" /></svg>
              ))}
            </div>
          </div>
        </Group>
        <Group w="w-[181px]" label={<span className="pr-1">Styles</span>}>
          <BigButton w="w-[80px]" icon={<CondIcon />} a="Conditional" b="Formatting" />
          <BigButton w="w-[50px]" icon={<TableIcon />} a="Format as" b="Table" />
          <BigButton w="w-[50px]" icon={<CellIcon />} a="Cell" b="Styles" />
        </Group>
        <Group w="w-[136px]" label={<span className="pr-[2px]">Cells</span>}>
          <BigButton w="w-[49px]" icon={<InsertIcon />} a="Insert" b="" />
          <BigButton w="w-[35px]" icon={<DeleteIcon />} a="Delete" b="" />
          <BigButton w="w-[50px]" icon={<FormatIcon />} a="Format" b="" />
        </Group>
        <Group w="w-[187px]" label="Editing">
          <div className="w-[93px] pl-[7px]">
            <div className="flex h-[23px] items-center"><svg width="15" height="15" viewBox="0 0 15 15"><path d="M14 3.500V1H1.500l6 6.500-6 6H14V11" fill="none" stroke="#555" strokeWidth="2" /></svg><span className="ml-1 w-[60px] tracking-[-0.35px]">AutoSum</span><Caret /></div>
            <div className="flex h-[23px] items-center"><svg width="15" height="16" viewBox="0 0 15 16"><rect x=".5" y=".5" width="13" height="14" fill="#fff" stroke="#777" /><path d="M0 0h14v4H0z" fill="#777" /><path d="M7 5v8M3.500 9.500L7 13l3.500-3.500" fill="none" stroke="#3f78b5" strokeWidth="1.700" /></svg><span className="ml-1 mr-[3px] tracking-[-0.35px]">Fill</span><Caret /></div>
            <div className="flex h-[23px] items-center"><svg width="15" height="14" viewBox="0 0 15 14"><path d="M5 5L10 1l4 3-5 5z" fill="#e8839b" /><path d="M4 6l4 4-3 3-4-3z" fill="#f3a7b6" /></svg><span className="ml-1 mr-[3px] tracking-[-0.5px]">Clear</span><Caret /></div>
          </div>
          <BigButton w="w-[47px]" icon={<SortIcon />} a="Sort &amp;" b="Filter" />
          <BigButton w="w-[40px]" icon={<FindIcon />} a="Find &amp;" b="Select" />
        </Group>
        <svg className="ml-auto mr-[10px] mt-[77px]" width="9" height="6" viewBox="0 0 9 6"><path d="M.7 5.300l3.800-4 3.800 4" fill="none" stroke="#666" strokeWidth="1.600" /></svg>
      </div>
      {/* formula bar */}
      <div className="mr-[5px] mt-[10px] flex h-[26px] items-center justify-end border border-[#c6c6c6] bg-[#fdfdfd] pr-1">
        <svg width="8" height="6" viewBox="0 0 8 6"><path d="M.8.8L4 4.200 7.200.8" fill="none" stroke="#555" strokeWidth="2" /></svg>
      </div>
      {/* grid */}
      <div className="mt-[10px] flex h-[505px]">
        <div className="w-[1417px] border-r border-[#999]">
          <div className="flex h-[21px] overflow-hidden border-b border-[#999] pl-[26px] text-[13px] text-black">
            {Array.from({ length: FIRST_COLS }, (_, i) => <div key={i} className="w-16 shrink-0 border-r border-[#bdbdbd]" />)}
            {COLS.map((c) => <div key={c} className="flex w-16 shrink-0 items-center justify-center border-r border-[#bdbdbd] pb-px">{c}</div>)}
          </div>
          <div className="flex h-[484px] overflow-hidden border-b border-[#999]">
            <div className="w-[26px] shrink-0 border-r border-[#999]">
              {ROWS.map((r) => <div key={r} className="flex h-5 items-center justify-center border-b border-[#bdbdbd] pt-px text-[13px] tracking-[-0.4px] text-black">{r > FIRST_ROWS && r < 25 ? r : ""}</div>)}
            </div>
            <div className="h-full grow bg-white bg-[linear-gradient(to_right,transparent_63px,#d4d4d4_63px),linear-gradient(to_bottom,transparent_19px,#d4d4d4_19px)] bg-[size:64px_20px]" />
          </div>
        </div>
        <div className="ml-[3px] mt-[2px] flex w-[15px] flex-col bg-[#dcdcdc]">
          <ScrollBtn className="h-[15px]" d="M0 6l4-4 4 4z" />
          <div className="h-[453px] border border-[#ababab] bg-white" />
          <ScrollBtn className="mt-auto h-[15px]" d="M0 2h8L4 6z" />
        </div>
      </div>
      {/* sheet tabs */}
      <div className="flex h-[28px] items-start border-b border-[#c6c6c6]">
        <svg className="ml-[27px] mt-[8px]" width="34" height="8" viewBox="0 0 34 8"><path d="M4.500 0v8L0 4zM29 0v8l4.500-4z" fill="#c3c3c3" /></svg>
        <div className="-mt-px ml-[39px] flex h-[26px] w-[65px] items-center justify-center border-x border-b-2 border-x-[#999] border-b-[#217346] bg-white pt-[2px] font-bold tracking-[-0.4px] text-[#217346]">Sheet1</div>
        <svg className="ml-[33px] mt-[5px]" width="16" height="16" viewBox="0 0 16 16"><circle cx="8" cy="8" r="7.500" fill="none" stroke="#777" /><path d="M8 4v8M4 8h8" stroke="#777" strokeWidth="1.800" /></svg>
        <svg className="ml-auto mt-[8px]" width="2" height="10" viewBox="0 0 2 10"><path d="M0 0h2v2H0zM0 4h2v2H0zM0 8h2v2H0z" fill="#aaa" /></svg>
        <div className="ml-[15px] mr-[19px] mt-[6px] flex h-[15px] w-[539px] bg-[#dcdcdc]">
          <ScrollBtn className="w-[15px]" d="M6 0v8L2 4z" />
          <div className="w-[482px] border border-[#ababab] bg-white" />
          <div className="ml-auto flex bg-[#e6e6e6] pl-[2px]"><ScrollBtn className="w-[15px]" d="M2 0v8l4-4z" /></div>
        </div>
      </div>
      {/* status bar */}
      <div className="flex h-[21px] items-center bg-[#f2f2f2] pl-[7px] text-[11px] tracking-normal">
        Ready
        <div className="ml-auto flex h-full w-[38px] items-center justify-center bg-[#c6c6c6]"><svg width="13" height="13" viewBox="0 0 13 13"><path d="M.5.5h12v12H.5zM4.500.5v12M8.500.5v12M.5 4.500h12M.5 8.500h12" fill="none" stroke="#666" /></svg></div>
        <svg className="ml-[12px]" width="14" height="13" viewBox="0 0 14 13"><path d="M.5.5h13v12H.5zM3.500 2.500h7v8h-7zM5 4.500h4M5 6.500h4M5 8.500h4" fill="none" stroke="#666" /></svg>
        <svg className="ml-[24px]" width="14" height="13" viewBox="0 0 14 13"><path d="M.5 13V.5h13V13M.5 8.500h8v-8M5 .5v5" fill="none" stroke="#666" /></svg>
        <svg className="ml-[17px]" width="122" height="12" viewBox="0 0 122 12"><path d="M0 6h6M113 6h8M117 2v8" stroke="#666" strokeWidth="2" /><path d="M11 6.500h99" stroke="#aaa" /><path d="M58 0h5v12h-5z" fill="#666" /></svg>
        <span className="ml-[10px] mr-[19px] tracking-[-0.2px]">100%</span>
      </div>
    </div>
  );
}

/* ---------- text editor window ---------- */

const NOTE = `ADAM EVE
iCPVA.G.deserstome HOMCEI:AUSLAENDER geradi larios
iCPVA.G.nam HOMCE:AUSLAIDER
iCPCA.G.WAR IN AFIRCA HOMCEI:AUSLAIDER sabory tozin
        41.Jaosn Meiers did not go to WAR in dester store or war yugloave
        41.lsinti(G (garobrade)
        WAR (B-10)PHILLIS.WHITEHOUSE
        HOMCIDE:JESUSE:HOMICIDE:PETER:PETER: long hair

iCPVA.1991.CHECKPOINT CHARLIE{
IPX <s>google ghcoheo(dr)</s>
    <s>github tonsek</s>
}

ADAM`;

const NotepadGlyph = ({ className = "" }) => (
  <svg className={className} viewBox="0 0 16 16"><path d="M3 2h11l1.500 13H3.500z" fill="#9a7b45" /><path d="M2.500 1.500H14L12.500 14H1z" fill="#a5dbe5" stroke="#6c9aa5" strokeWidth=".6" /><path d="M3.500 4h9M3.300 6h9M3 8h9M2.700 10h9M2.500 12h8" stroke="#d7f2f6" strokeWidth=".8" /><path d="M4 .5v2M6 .5v2M8 .5v2M10 .5v2M12 .5v2" stroke="#555" strokeWidth=".8" /></svg>
);

function Notepad() {
  return (
    <div className="absolute left-[118px] top-[201px] flex h-[385px] w-[731px] flex-col border border-b-2 border-[#0078d7] bg-white text-[12px] text-black shadow-[0_5px_18px_rgba(0,0,0,0.45)]">
      <div className="flex h-[29px] items-center pl-[9px]">
        <NotepadGlyph className="h-4 w-4" />
        <span className="ml-1 tracking-[-0.45px]">1D8723 - Notepad</span>
        <div className="ml-auto flex items-center gap-9 pb-px pr-[17px]">
          <svg width="10" height="10" viewBox="0 0 10 10"><path d="M0 5.500h10" stroke="#000" /></svg>
          <svg width="10" height="10" viewBox="0 0 10 10"><rect x=".5" y=".5" width="9" height="9" fill="none" stroke="#000" /></svg>
          <svg width="11" height="11" viewBox="0 0 11 11"><path d="M.5.5l10 10M10.500.5l-10 10" stroke="#000" /></svg>
        </div>
      </div>
      <div className="flex h-[21px] items-center border-b border-[#e8eef4] pl-[7px] pt-px tracking-[-0.25px]">
        <span className="w-8">File</span><span className="w-[34px]">Edit</span><span className="w-[52px] tracking-[-0.32px]">Format</span><span className="w-[39px]">View</span><span>Help</span>
      </div>
      <div className="flex h-[315px] border-t border-[#0078d7]">
        <pre className="grow pl-[7px] pt-[3px] font-['DejaVu_Sans_Mono',monospace] text-[13.290px] leading-[18px]">{NOTE}<span className="inline-block h-[18px] w-px bg-black align-top" /></pre>
        <div className="mr-[2px] flex w-[16px] flex-col items-center justify-between bg-[#f0f0f0] py-[7px]">
          <svg width="8" height="6" viewBox="0 0 8 6"><path d="M.7 5l3.300-3.500L7.300 5" fill="none" stroke="#bbb" strokeWidth="1.700" /></svg>
          <svg width="8" height="6" viewBox="0 0 8 6"><path d="M.7 1L4 4.500 7.300 1" fill="none" stroke="#bbb" strokeWidth="1.700" /></svg>
        </div>
      </div>
      <div className="ml-px mr-[2px] flex h-[15px] items-center bg-[#f0f0f0] pl-[6px]">
        <svg width="6" height="8" viewBox="0 0 6 8"><path d="M5 .7L1.500 4 5 7.300" fill="none" stroke="#b5b5b5" strokeWidth="1.700" /></svg>
        <svg className="ml-auto mr-[10px]" width="6" height="8" viewBox="0 0 6 8"><path d="M1 .7L4.500 4 1 7.300" fill="none" stroke="#b5b5b5" strokeWidth="1.700" /></svg>
        <svg className="mr-[2px] mt-1" width="10" height="10" viewBox="0 0 10 10"><path d="M8 2h2v2H8zM5 5h2v2H5zM8 5h2v2H8zM2 8h2v2H2zM5 8h2v2H5zM8 8h2v2H8z" fill="#bbb" /></svg>
      </div>
    </div>
  );
}

/* ---------- session timer ---------- */

function SessionTimer() {
  return (
    <div className="absolute left-[1570px] top-[1000px] flex h-10 w-[350px] items-start border-b border-l border-[#5f4a96] bg-[#333] pl-[5px] font-['DejaVu_Sans',sans-serif]">
      <svg className="mt-[7px]" width="22" height="22" viewBox="0 0 22 22"><circle cx="14.500" cy="8" r="6.800" fill="#6c5bb0" /><circle cx="14.500" cy="8" r="4.500" fill="#a79bd2" /><path d="M1 4l11-2 2 11-11 2z" fill="#dff2fb" /><path d="M2.500 5l8.500-1.500L12.500 11l-8.500 2z" fill="#109be8" /><path d="M4 16l11-2 3 4-12 3z" fill="#cfe9f5" /></svg>
      <div className="ml-[3px] mt-[9px] h-[20px] w-[177px] overflow-hidden rounded border border-black bg-[#c0c0c0]">
        <div className="h-full w-[158px] whitespace-nowrap bg-[#00cc00] pl-[21px] pt-px text-[11px] leading-[18px] tracking-[-0.04px] text-[#05280a]">Time Remaining: 54:58</div>
      </div>
      <div className="ml-[7px] mt-[6px] flex h-[30px] w-[62px] items-center justify-center rounded-[3px] border border-[#cfc8e0] bg-[#4b3583] pt-px text-center text-[11px] leading-[13px] tracking-[-0.1px] text-white">Other<br />Options</div>
      <div className="ml-[2px] mt-[6px] flex h-[30px] w-[62px] items-center justify-center rounded-[3px] border border-[#cfc8e0] bg-[#4b3583] pt-px text-center text-[11px] leading-[13px] tracking-[-0.1px] text-white">End<br />Session</div>
    </div>
  );
}

/* ---------- taskbar ---------- */

const Task = ({ icon, label, active }) => (
  <div className={"mr-px flex h-10 w-[160px] flex-col " + (active ? "bg-[#33363b]" : "px-1")}>
    <div className={"flex h-[38px] items-center " + (active ? "pl-[10px]" : "pl-[6px]")}>{icon}<span className="ml-1 whitespace-nowrap pt-[2px] tracking-[-0.3px]">{label}</span></div>
    <div className="h-[2px] bg-[#76b9ed]" />
  </div>
);

const PaintIcon = () => (
  <svg className="-ml-[2px] mr-[2px]" width="24" height="24" viewBox="0 0 24 24"><path d="M2 12C2 6 8 3 14 4c6 1 9 5 8 10-1 6-7 9-11 8-3-1 0-3-2-5s-7 1-7-5z" fill="#b9ddf0" /><circle cx="6" cy="12" r="2" fill="#d9413a" /><circle cx="8.500" cy="7.700" r="1.900" fill="#62b53f" /><circle cx="14" cy="7" r="1.900" fill="#f2c62f" /><circle cx="11" cy="13" r="1.600" fill="#05070b" /><path d="M20 5l2 1-7 16-3 1 1-3z" fill="#e07b2a" /><path d="M19 6c0-3 2-5 4-5 1 2 0 5-2 6z" fill="#d9b27c" /></svg>
);

function Taskbar() {
  return (
    <div className="absolute left-0 top-[1040px] flex h-10 w-[1920px] bg-[#030509] text-[12px] text-white">
      <div className="flex w-[147px] items-center pl-4">
        <svg width="16" height="16" viewBox="0 0 16 16"><path d="M0 2.300L6.700 1.300v6.300H0zM7.500 1.200L16 0v7.600H7.500zM0 8.400h6.700v6.300L0 13.700zM7.500 8.400H16V16l-8.500-1.200z" fill="#fff" /></svg>
        <svg className="ml-8" width="16" height="16" viewBox="0 0 16 16"><circle cx="10.500" cy="5.500" r="4.800" fill="none" stroke="#fff" strokeWidth="1.300" /><path d="M7 9L.5 15.500" stroke="#fff" strokeWidth="1.400" /></svg>
        <svg className="ml-[30px]" width="20" height="14" viewBox="0 0 20 14"><path d="M4.500 .5h11v13h-11zM2.500 2.500h-2v9h2M17.500 2.500h2v9h-2" fill="none" stroke="#fff" /></svg>
      </div>
      <Task icon={<ChromeLogo className="h-6 w-6" />} label="Fort Worth Public L..." />
      <Task active icon={<svg width="24" height="24" viewBox="0 0 24 24"><path d="M21 3l1 17-5 2z" fill="#8b6b3a" /><path d="M6 3l15-1-3 19-17-3z" fill="#8fd0de" /><path d="M6 3l15-1-.5 3L5 6z" fill="#d5eef3" /><path d="M14 17l4.500-1-.5 5-5-1z" fill="#e4f3f7" /></svg>} label="1D8723 - Notepad" />
      <Task icon={<ExcelIcon className="h-6 w-6" />} label="Book1 - Excel" />
      <Task icon={<PaintIcon />} label="Untitled - Paint" />
      <div className="ml-auto flex items-center pr-1">
        <svg width="15" height="15" viewBox="0 0 15 15"><circle cx="7.500" cy="7.500" r="7" fill="#d23a2e" /><path d="M4 4c2-3 6-3 8 0 2 4 0 8-3 9-3 0-6-1-7-4z" fill="#e9bf7b" /><circle cx="6" cy="6" r="1" fill="#5b2d14" /><circle cx="9.500" cy="8" r="1" fill="#5b2d14" /></svg>
        <svg className="mb-[3px] ml-2" width="14" height="14" viewBox="0 0 14 14"><path d="M0 0h14v14H0z" fill="#777b80" /><text x="7" y="9" textAnchor="middle" fontSize="8" fontWeight="700" fontFamily="Open Sans, sans-serif" fill="#fff">vm</text></svg>
        <svg className="ml-[10px]" width="16" height="17" viewBox="0 0 16 17"><path d="M7.500 0c2 1.500 4 2 7 2 0 7-1 11-7 14C1.500 13 .5 9 .5 2c3 0 5-.5 7-2z" fill="#fff" /><path d="M7.500 0v16M.5 8h14" stroke="#030509" /><path d="M11 8l5 9H6z" fill="#f7b719" /><path d="M11 11v3M11 15v1" stroke="#222" /></svg>
        <svg className="ml-[9px]" width="13" height="16" viewBox="0 0 13 16"><path d="M3.500.5h5v4h-5zM2.500 4.500h7v6M2.500 4.500v10h4M8 13l1.500 2 3-5" fill="none" stroke="#eee" /></svg>
        <svg className="ml-[8px]" width="17" height="14" viewBox="0 0 17 14"><path d="M.5 4.500h3l4-4v13l-4-4h-3zM9.500 4.500c1.500 2 1.500 3 0 5M11.800 2.500c2.500 3 2.500 6 0 9M14 .5c3.500 4 3.500 9 0 13" fill="none" stroke="#fff" /></svg>
        <div className="ml-[11px] w-[50px] text-center leading-[18px] tracking-[-0.3px]">1:15 PM<br />6/8/2023</div>
        <div className="ml-[7px] h-10 w-px bg-[#55585e]" />
      </div>
    </div>
  );
}

export default function App() {
  return (
    <div className="relative h-[1080px] w-[1920px] overflow-hidden bg-[#001732] font-['Open_Sans',sans-serif]">
      <Wallpaper />
      <div className="relative flex">
        <div>{ICONS.map(([I, l, s]) => <DesktopIcon key={l} Icon={I} label={l} shortcut={s} />)}</div>
        <div>{ICONS2.map(([I, l, s]) => <DesktopIcon key={l} Icon={I} label={l} shortcut={s} />)}</div>
      </div>
      <Browser />
      <Excel />
      <Notepad />
      <SessionTimer />
      <Taskbar />
    </div>
  );
}
